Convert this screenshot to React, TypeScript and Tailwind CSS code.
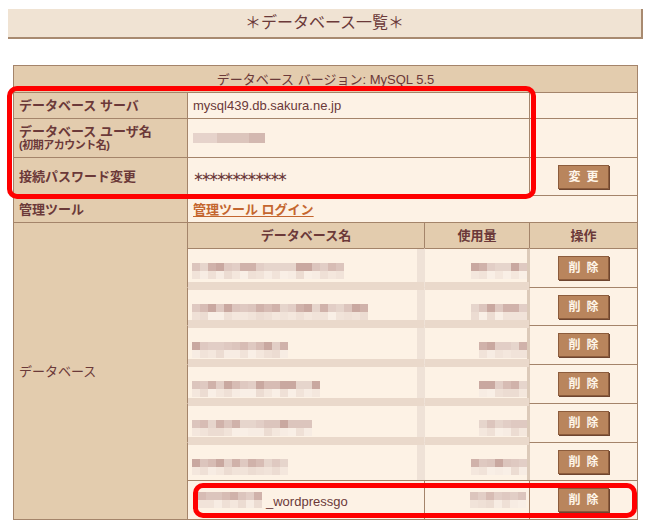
import React from "react";

const B = "border-[#a4846a]";

function makeRng(seed: number) {
  let s = seed * 7919 + 17;
  return () => {
    s = (s * 9301 + 49297) % 233280;
    return s / 233280;
  };
}

const DARK = ["#dcc5bd", "#d7bcb4", "#e2cec6", "#d0b2aa", "#e6d5cc", "#c9a8a0", "#dfc9c1"];
const LIGHT = ["#f4e7dd", "#efe0d6", "#f7ece3", "#ecdcd2", "#f1e3d9", "#f9efe6"];

function Mosaic({ cols, seed }: { cols: number; seed: number }) {
  const r = makeRng(seed);
  const top = Array.from({ length: cols }, () => DARK[Math.floor(r() * DARK.length)]);
  const bot = Array.from({ length: cols }, () => LIGHT[Math.floor(r() * LIGHT.length)]);
  return (
    <div className="flex flex-col">
      <div className="flex">
        {top.map((c, i) => (
          <div key={i} className="w-[8px] h-[8px]" style={{ backgroundColor: c }} />
        ))}
      </div>
      <div className="flex">
        {bot.map((c, i) => (
          <div key={i} className="w-[8px] h-[8px]" style={{ backgroundColor: c }} />
        ))}
      </div>
    </div>
  );
}

function Btn({ label }: { label: string }) {
  return (
    <div className="w-[51px] h-[24px] bg-[#b9855d] border border-[#8c5c3c] shadow-[1px_1px_0_#6e4530] flex items-center justify-center text-[12px] font-bold text-[#fff6ea] tracking-[6px] pl-[6px] leading-none">
      {label}
    </div>
  );
}

const rows = [
  { h: "h-[39px]", name: 19, use: 7, seed: 3 },
  { h: "h-[38px]", name: 22, use: 7, seed: 11 },
  { h: "h-[39px]", name: 12, use: 6, seed: 23 },
  { h: "h-[39px]", name: 16, use: 6, seed: 37 },
  { h: "h-[39px]", name: 15, use: 6, seed: 41 },
  { h: "h-[38px]", name: 12, use: 7, seed: 53 },
];

export default function App() {
  return (
    <div className="relative w-[647px] h-[531px] bg-white overflow-hidden font-['Liberation_Sans','Noto_Sans_CJK_JP',sans-serif] text-[#6b3939]">
      <div className="pt-[9px] pl-[8px]">
        <div className="w-[635px] h-[30px] bg-[#f0e3d3] border-r-2 border-b-2 border-[#a88a70] flex items-center justify-center text-[16px] leading-none">
          ＊データベース一覧＊
        </div>
      </div>

      <div className={`ml-[13px] mt-[26px] w-[625px] border ${B} text-[13px] leading-none`}>
        {/* header */}
        <div className="h-[26px] bg-[#e3ccae] flex items-center justify-center">
          データベース バージョン: MySQL 5.5
        </div>

        {/* server */}
        <div className={`flex h-[26px] border-t ${B}`}>
          <div className="w-[173px] bg-[#e3ccae] flex items-center pl-[5px] font-bold">データベース サーバ</div>
          <div className={`w-[342px] bg-[#fdf2e5] border-l ${B} flex items-center pl-[5px]`}>mysql439.db.sakura.ne.jp</div>
          <div className={`w-[108px] bg-[#fdf2e5] border-l ${B}`} />
        </div>

        {/* user */}
        <div className={`flex h-[39px] border-t ${B}`}>
          <div className="w-[173px] bg-[#e3ccae] flex flex-col justify-center pl-[5px] font-bold">
            <div className="text-[13px] leading-[14px]">データベース ユーザ名</div>
            <div className="text-[11px] leading-[13px] tracking-[-0.5px]">(初期アカウント名)</div>
          </div>
          <div className={`w-[342px] bg-[#fdf2e5] border-l ${B} flex items-center pl-[5px]`}>
            <div className="flex">
              <div className="w-[24px] h-[10px] bg-[#e6d3cb]" />
              <div className="w-[32px] h-[10px] bg-[#dcc5bc]" />
              <div className="w-[16px] h-[10px] bg-[#d3b8b0]" />
            </div>
          </div>
          <div className={`w-[108px] bg-[#fdf2e5] border-l ${B}`} />
        </div>

        {/* password */}
        <div className={`flex h-[38px] border-t ${B}`}>
          <div className="w-[173px] bg-[#e3ccae] flex items-center pl-[5px] font-bold">接続パスワード変更</div>
          <div className={`w-[342px] bg-[#fdf2e5] border-l ${B} flex items-center pl-[5px] tracking-[-3.25px] text-[13px] font-['DejaVu_Sans',sans-serif]`}>∗∗∗∗∗∗∗∗∗∗∗∗</div>
          <div className={`w-[108px] bg-[#fdf2e5] border-l ${B} flex items-center justify-center`}>
            <Btn label="変更" />
          </div>
        </div>

        {/* management */}
        <div className={`flex h-[27px] border-t ${B}`}>
          <div className="w-[173px] bg-[#e3ccae] flex items-center pl-[5px] font-bold">管理ツール</div>
          <div className={`w-[450px] bg-[#fdf2e5] border-l ${B} flex items-center pl-[5px]`}>
            <span className="text-[#c4662f] underline underline-offset-2 font-bold">管理ツール ログイン</span>
          </div>
        </div>

        {/* databases */}
        <div className={`flex border-t ${B}`}>
          <div className="w-[173px] bg-[#e3ccae] flex items-center pl-[5px]">データベース</div>
          <div className="flex flex-col">
            <div className="flex h-[25px] bg-[#e3ccae] font-bold">
              <div className={`w-[237px] border-l ${B} flex items-center justify-center`}>データベース名</div>
              <div className={`w-[105px] border-l ${B} flex items-center justify-center`}>使用量</div>
              <div className={`w-[108px] border-l ${B} flex items-center justify-center`}>操作</div>
            </div>

            {rows.map((r, i) => (
              <div key={i} className={`flex ${r.h}`}>
                <div
                  className={`w-[237px] bg-[#fdf2e5] border-l border-t ${B} ${i === 0 ? "" : "border-t-[#ead9cb]"} flex flex-col`}
                >
                  {i > 0 && <div className="h-[2px] bg-[#ead9cb]" />}
                  <div className="flex flex-1">
                    <div className="flex-1 pl-[4px] pt-[14px]">
                      <Mosaic cols={r.name} seed={r.seed} />
                    </div>
                    <div className="w-[7px] bg-[#efe2d7]" />
                  </div>
                  {i < 5 && <div className="h-[5px] bg-[#ead9cb]" />}
                </div>
                <div
                  className={`w-[105px] bg-[#fdf2e5] border-l border-t border-l-[#efe2d7] ${i === 0 ? B : "border-t-[#ead9cb]"} flex flex-col`}
                >
                  {i > 0 && <div className="h-[2px] bg-[#ead9cb]" />}
                  <div className="flex flex-1">
                    <div className="flex-1 flex justify-end pt-[14px]">
                      <Mosaic cols={r.use} seed={r.seed + 5} />
                    </div>
                    <div className="w-[2px] bg-[#dccab9]" />
                  </div>
                  {i < 5 && <div className="h-[5px] bg-[#ead9cb]" />}
                </div>
                <div className={`w-[108px] bg-[#fdf2e5] border-t ${B} border-l border-l-[#dccab9] flex items-center justify-center`}>
                  <Btn label="削除" />
                </div>
              </div>
            ))}

            {/* last row */}
            <div className="flex h-[39px]">
              <div className={`w-[237px] bg-[#fdf2e5] border-l border-t ${B} flex items-center pl-[10px]`}>
                <Mosaic cols={8} seed={97} />
                <span className="ml-[4px] mt-[2px]">_wordpressgo</span>
              </div>
              <div className={`w-[105px] bg-[#fdf2e5] border-l border-t ${B} flex items-center justify-end pr-[3px]`}>
                <Mosaic cols={7} seed={101} />
              </div>
              <div className={`w-[108px] bg-[#fdf2e5] border-l border-t ${B} flex items-center justify-center`}>
                <Btn label="削除" />
              </div>
            </div>
          </div>
        </div>
      </div>

      {/* annotation boxes */}
      <div className="absolute left-[7px] top-[86px] w-[529px] h-[113px] border-[5px] border-[#ff0000] rounded-[10px]" />
      <div className="absolute left-[193px] top-[483px] w-[444px] h-[35px] border-[5px] border-[#ff0000] rounded-[10px]" />
    </div>
  );
}
